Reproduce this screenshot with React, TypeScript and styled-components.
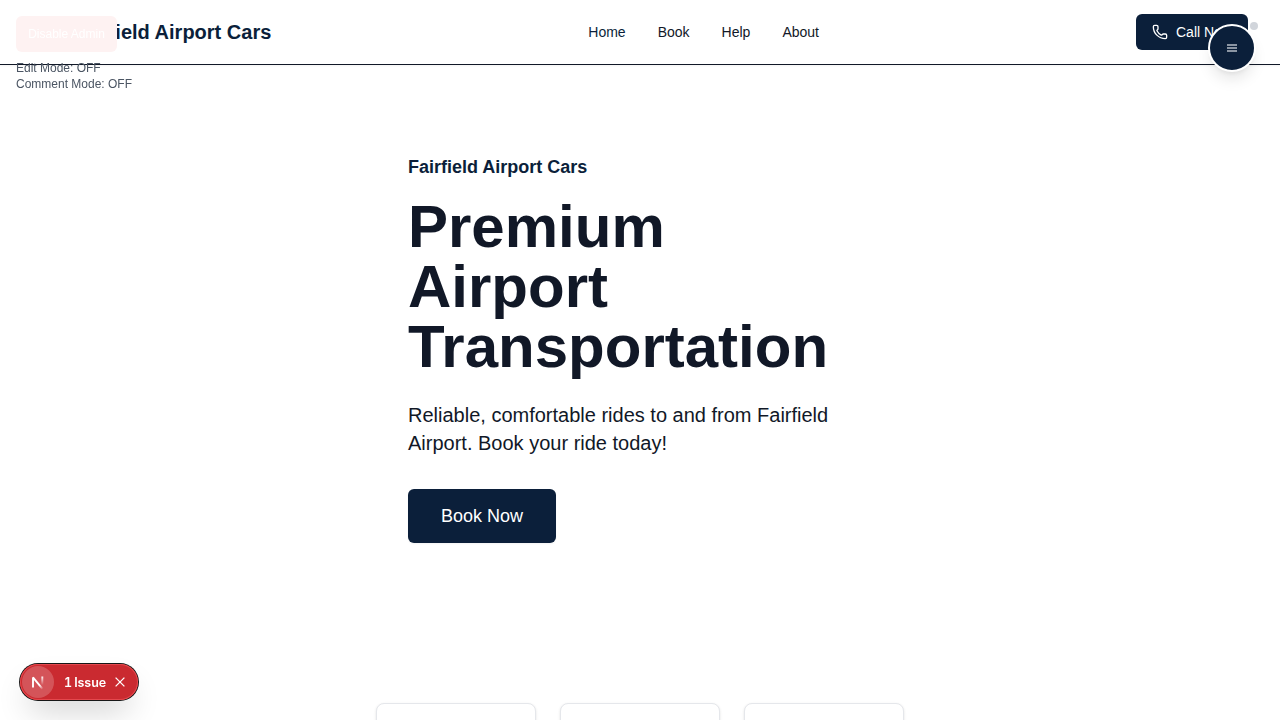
import React from "react";
import styled, { createGlobalStyle } from "styled-components";
import { Phone } from "lucide-react";

const navy = "#0b1f3a";
const ink = "#111827";

const Global = createGlobalStyle`
  *, *::before, *::after { box-sizing: border-box; }
  html, body { margin: 0; background: #fff; }
  body { font-family: "Liberation Sans", Arial, sans-serif; color: ${ink}; overflow: hidden; }
  h1, p { margin: 0; }
  button { font-family: inherit; border: 0; cursor: pointer; }
`;

const Page = styled.div`
  height: 720px;
  overflow: hidden;
`;

const Header = styled.header`
  height: 65px;
  border-bottom: 1px solid ${ink};
  padding: 0 32px;
  display: flex;
  align-items: center;
  justify-content: space-between;
  background: #fff;
  box-shadow: 0 1px 2px rgba(0, 0, 0, 0.05);
`;

const Brand = styled.div`
  padding-left: 40px;
  font-size: 20px;
  line-height: 28px;
  font-weight: 700;
  color: ${navy};
`;

const Nav = styled.nav`
  display: flex;
  gap: 32px;
`;

const NavLink = styled.a<{ $active?: boolean }>`
  font-size: 14px;
  line-height: 20px;
  color: ${(p) => (p.$active ? navy : ink)};
`;

const CallButton = styled.button`
  width: 112px;
  height: 36px;
  padding: 0 16px;
  display: flex;
  align-items: center;
  gap: 8px;
  border-radius: 6px;
  background: ${navy};
  color: #fff;
  font-size: 14px;
  white-space: nowrap;
`;

const Hero = styled.section`
  width: 528px;
  margin: 0 auto;
  padding: 88px 32px 160px;
  display: flex;
  flex-direction: column;
  align-items: flex-start;
`;

const Eyebrow = styled.p`
  font-size: 18px;
  line-height: 28px;
  font-weight: 700;
  color: ${navy};
`;

const Title = styled.h1`
  margin-top: 16px;
  font-size: 60px;
  line-height: 60px;
  font-weight: 700;
`;

const Lead = styled.p`
  margin-top: 24px;
  font-size: 20px;
  line-height: 28px;
`;

const BookButton = styled.button`
  margin-top: 32px;
  width: 148px;
  height: 54px;
  border-radius: 6px;
  background: ${navy};
  color: #fff;
  font-size: 18px;
  box-shadow: 0 1px 2px rgba(0, 0, 0, 0.05);
`;

const Features = styled.section`
  width: 528px;
  margin: 0 auto;
  display: grid;
  grid-template-columns: repeat(3, 1fr);
  gap: 24px;
`;

const FeatureCard = styled.div`
  height: 200px;
  border: 1px solid #e5e7eb;
  border-radius: 8px;
  background: #fff;
  box-shadow: 0 1px 3px rgba(0, 0, 0, 0.1), 0 1px 2px -1px rgba(0, 0, 0, 0.1);
`;

const AdminPanel = styled.aside`
  position: fixed;
  top: 16px;
  left: 16px;
  display: flex;
  flex-direction: column;
  align-items: flex-start;
`;

const AdminButton = styled.button`
  width: 101px;
  height: 36px;
  padding: 0;
  margin-bottom: 8px;
  border-radius: 6px;
  background: #fef2f2;
  color: #fff;
  font-size: 12px;
`;

const ModeLine = styled.p`
  font-size: 12px;
  line-height: 16px;
  color: #4b5563;
`;

const MenuFab = styled.button`
  position: fixed;
  top: 24px;
  right: 24px;
  width: 48px;
  height: 48px;
  padding: 0;
  display: grid;
  place-items: center;
  border: 2px solid #fff;
  border-radius: 50%;
  background: ${navy};
  color: #fff;
  box-shadow: 0 10px 15px -3px rgba(0, 0, 0, 0.1), 0 4px 6px -4px rgba(0, 0, 0, 0.1);
`;

const StatusDot = styled.span`
  position: absolute;
  top: -4px;
  right: -4px;
  width: 8px;
  height: 8px;
  border-radius: 50%;
  background: #d1d5db;
`;

const IssuePill = styled.div`
  position: fixed;
  left: 20px;
  bottom: 20px;
  width: 118px;
  height: 36px;
  padding: 2px;
  display: flex;
  align-items: center;
  border-radius: 18px;
  background: #ca2a30;
  color: #fff;
  font: 500 13px Inter, sans-serif;
  font-feature-settings: "tnum";
  box-shadow: 0 0 0 1px #171717, inset 0 0 0 1px #e5484d,
    0 16px 32px -8px rgba(0, 0, 0, 0.24);
`;

const LogoDisc = styled.span`
  width: 32px;
  height: 32px;
  border-radius: 50%;
  background: rgba(255, 255, 255, 0.2);
  display: grid;
  place-items: center;
`;

const IssueText = styled.span`
  margin-left: 10px;
  width: 43px;
  font-size: 12.5px;
  font-weight: 600;
  letter-spacing: -0.1px;
  word-spacing: -1px;
  white-space: nowrap;
`;

const CloseIcon = styled.svg`
  margin-left: 8px;
`;

export default function App() {
  return (
    <Page>
      <Global />
      <Header>
        <Brand>Fairfield Airport Cars</Brand>
        <Nav>
          <NavLink $active>Home</NavLink>
          <NavLink>Book</NavLink>
          <NavLink>Help</NavLink>
          <NavLink>About</NavLink>
        </Nav>
        <CallButton>
          <Phone size={16} />
          Call Now
        </CallButton>
      </Header>
      <Hero>
        <Eyebrow>Fairfield Airport Cars</Eyebrow>
        <Title>Premium Airport Transportation</Title>
        <Lead>Reliable, comfortable rides to and from Fairfield Airport. Book your ride today!</Lead>
        <BookButton>Book Now</BookButton>
      </Hero>
      <Features>
        <FeatureCard />
        <FeatureCard />
        <FeatureCard />
      </Features>
      <AdminPanel>
        <AdminButton>Disable Admin</AdminButton>
        <ModeLine>Edit Mode: OFF</ModeLine>
        <ModeLine>Comment Mode: OFF</ModeLine>
      </AdminPanel>
      <MenuFab aria-label="Menu">
        <svg width="10" height="8" viewBox="0 0 10 8" stroke="#8b95a3" strokeWidth="2">
          <path d="M0 1h10M0 4h10M0 7h10" />
        </svg>
        <StatusDot />
      </MenuFab>
      <IssuePill>
        <LogoDisc>
          <svg width="16" height="16" viewBox="0 0 16 16" fill="none" strokeWidth="1.9">
            <defs>
              <linearGradient id="diag" x1="8" y1="8" x2="13.5" y2="14.5" gradientUnits="userSpaceOnUse">
                <stop offset="0.4" stopColor="#fff" />
                <stop offset="1" stopColor="#fff" stopOpacity="0" />
              </linearGradient>
              <linearGradient id="stem" x1="0" y1="2" x2="0" y2="11" gradientUnits="userSpaceOnUse">
                <stop stopColor="#fff" />
                <stop offset="1" stopColor="#fff" stopOpacity="0" />
              </linearGradient>
            </defs>
            <path d="M3 13.5V3.4L12.5 14.8" stroke="url(#diag)" strokeLinejoin="bevel" />
            <path d="M12.3 2.5v8.5" stroke="url(#stem)" />
          </svg>
        </LogoDisc>
        <IssueText>1 Issue</IssueText>
        <CloseIcon width="10" height="10" viewBox="0 0 10 10" stroke="#fff" strokeWidth="1.3">
          <path d="M.6.6l8.8 8.8M9.4.6L.6 9.4" />
        </CloseIcon>
      </IssuePill>
    </Page>
  );
}
